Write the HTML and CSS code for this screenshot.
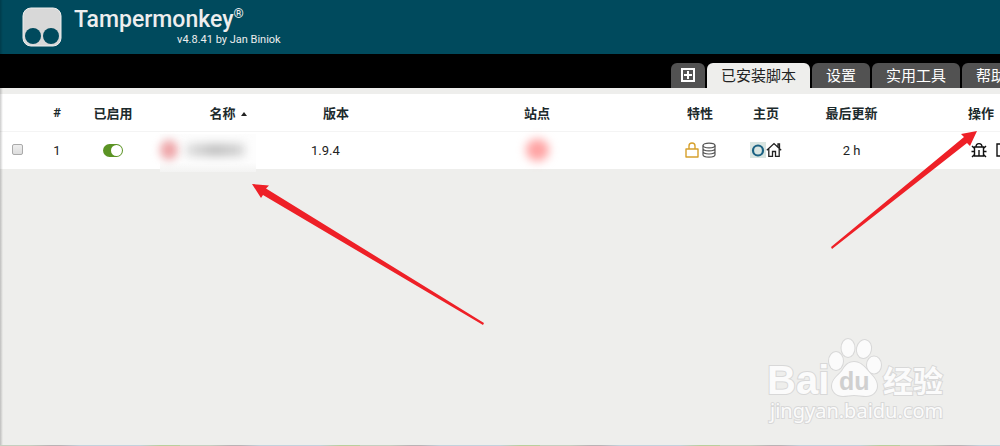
FILE: index.html
```html
<!DOCTYPE html>
<html lang="zh-CN">

<head>
    <meta charset="UTF-8">
    <meta name="viewport" content="width=device-width, initial-scale=1.0">
    <title>Tampermonkey</title>
    <link rel="stylesheet" href="styles.css">
</head>

<body>
    <header class="header">
        <svg class="logo" viewBox="0 0 40 40" aria-hidden="true">
            <rect class="logo-face" x="1" y="1" width="38" height="38" rx="8"/>
            <circle class="logo-eye" cx="11" cy="29" r="8"/>
            <circle class="logo-eye" cx="29" cy="29" r="8"/>
        </svg>
        <div class="title">
            <h1>Tampermonkey<sup>®</sup></h1>
            <p>v4.8.41 by Jan Biniok</p>
        </div>
    </header>

    <nav class="tabs">
        <a class="tab tab-new" href="#new" aria-label="+">
            <svg class="icon" viewBox="0 0 16 16" aria-hidden="true">
                <path d="M2 2h12v12H2zM8 4v8M4 8h8" fill="none" stroke="#fff" stroke-width="2"/>
            </svg>
        </a>
        <a class="tab active" href="#installed">已安装脚本</a>
        <a class="tab" href="#settings">设置</a>
        <a class="tab" href="#utilities">实用工具</a>
        <a class="tab" href="#help">帮助</a>
    </nav>

    <main>
        <table class="scripts">
            <thead>
                <tr>
                    <th class="col-select"></th>
                    <th class="col-number">#</th>
                    <th class="col-enabled">已启用</th>
                    <th class="col-name">名称 <span class="sort"></span></th>
                    <th class="col-version">版本</th>
                    <th class="col-site">站点</th>
                    <th class="col-features">特性</th>
                    <th class="col-home">主页</th>
                    <th class="col-updated">最后更新</th>
                    <th class="col-actions">操作</th>
                </tr>
            </thead>
            <tbody>
                <tr>
                    <td class="col-select"><input type="checkbox" class="check" aria-label="1"></td>
                    <td>1</td>
                    <td><input type="checkbox" class="switch" aria-label="已启用" checked></td>
                    <td class="col-name"><div class="hidden-name"><span class="smudge smudge-icon"></span><span class="smudge smudge-text"></span></div></td>
                    <td class="col-version">1.9.4</td>
                    <td class="col-site"><span class="smudge smudge-site"></span></td>
                    <td>
                        <div class="icons">
                            <svg class="icon" viewBox="0 0 16 16" fill="none" stroke="#d6a02c" stroke-width="1.4" stroke-linejoin="round" aria-hidden="true">
                                <path d="M2 7h12v8H2zM5 7V4a3 3 0 0 1 6 0v3"/>
                            </svg>
                            <svg class="icon" viewBox="0 0 16 16" fill="none" stroke="#555" stroke-width="1.2" aria-hidden="true">
                                <ellipse cx="8" cy="3.5" rx="6" ry="2.4"/>
                                <path d="M2 3.5v9.2c0 3.2 12 3.2 12 0V3.5M2 6.5c0 3.2 12 3.2 12 0M2 9.6c0 3.2 12 3.2 12 0"/>
                            </svg>
                        </div>
                    </td>
                    <td>
                        <div class="icons icons-home">
                            <svg class="icon" viewBox="0 0 16 16" aria-hidden="true">
                                <path fill="#d9e5e1" d="M0 0h16v16H0z"/>
                                <circle cx="8" cy="8.5" r="5" fill="none" stroke="#1b6283" stroke-width="2.2"/>
                            </svg>
                            <svg class="icon" viewBox="0 0 16 16" fill="none" stroke="#222" stroke-width="1.3" aria-hidden="true">
                                <path d="M.8 8.2 8 1.6l7.2 6.6M12 5V2h1.5v4.500M2.800 7v7.300h3.700V9.500h3v4.800h3.700V7"/>
                            </svg>
                        </div>
                    </td>
                    <td>2 h</td>
                    <td class="col-actions">
                        <div class="icons icons-actions">
                            <svg class="icon" viewBox="0 0 16 16" fill="none" stroke="#111" stroke-width="1.4" aria-hidden="true">
                                <path d="M3.500 5h9v9h-9zM5 5c0-4.500 6-4.500 6 0M8 8v6M.5 9.500h3M12.500 9.500h3M1 4l2.500 2.500M15 4l-2.500 2.500M1 15l2.500-2.500M15 15l-2.500-2.500"/>
                            </svg>
                            <svg class="icon" viewBox="0 0 16 16" fill="none" stroke="#111" stroke-width="1.4" aria-hidden="true">
                                <path d="M1 2h12v12H1z"/>
                            </svg>
                        </div>
                    </td>
                </tr>
            </tbody>
        </table>
    </main>

    <!-- red pointers over the page -->
    <svg class="arrows" viewBox="0 0 1000 446" aria-hidden="true">
        <path d="M252 184 269 185.500 266 188.500 484 323 483 325 263 195 261 198Z"/>
        <path d="M977 131 961 134 964 137 831 247 832 249 967 143 970 146Z"/>
    </svg>

    <svg class="watermark" viewBox="0 0 184 92" role="img" aria-label="Baidu 经验">
        <g class="mark">
            <text class="mark-latin" x="0" y="57">Bai</text>
            <ellipse cx="69" cy="24" rx="7" ry="9"/>
            <ellipse cx="81" cy="11" rx="6.500" ry="9"/>
            <ellipse cx="97" cy="12" rx="7" ry="9" transform="rotate(12 97 12)"/>
            <ellipse cx="107" cy="28" rx="7" ry="8.500"/>
            <path d="M87 25c-6 0-9 4-12 9-4 5-10 8-10 15 0 6 5 10 11 10 4 0 7-1 11-1s8 1 12 1c6 0 11-4 11-10 0-7-5-10-9-15-4-5-8-9-14-9z"/>
            <text class="mark-cjk" x="116" y="55">经验</text>
            <text class="mark-url" x="3" y="81">jingyan.baidu.com</text>
        </g>
        <text class="mark-du" x="72" y="53">du</text>
    </svg>
    <div class="page-end"></div>
</body>

</html>
```
FILE: styles.css
```css
body {
    font-family: Roboto, "Noto Sans CJK SC", sans-serif;
    font-size: 13px;
    margin: 0;
    min-height: 100vh;
    position: relative;
    overflow: hidden;
    background-color: #eeeeec;
    color: #222;
}

/* shade along the left edge */
body::before {
    content: "";
    position: absolute;
    top: 0;
    bottom: 0;
    left: 0;
    width: 3px;
    background: linear-gradient(to right, rgba(0, 0, 0, 0.2), transparent);
}

.header {
    background-color: #004a5d;
    color: #eee;
    height: 54px;
    padding-left: 22px;
    display: flex;
    align-items: center;
    gap: 12px;
}

.logo {
    width: 40px;
    height: 40px;
}

.logo-face {
    fill: #d8d8d8;
    stroke: #eee;
    stroke-width: 1;
}

.logo-eye {
    fill: #004a5d;
}

.title {
    text-align: right;
}

.title h1 {
    margin: 0;
    padding-right: 37px;
    font-size: 23px;
    font-weight: 500;
    line-height: 26px;
}

.title sup {
    font-size: 13px;
    line-height: 0;
}

.title p {
    margin: 0;
    font-size: 11px;
    line-height: 14px;
}

.tabs {
    background-color: #000;
    height: 34px;
    display: flex;
    justify-content: flex-end;
    align-items: flex-end;
    gap: 2px;
    margin-right: -20px;
}

.tab {
    box-sizing: border-box;
    height: 25px;
    padding: 0 14px;
    border-radius: 6px 6px 0 0;
    background-color: #525252;
    color: #fff;
    font-size: 15px;
    line-height: 27px;
    text-decoration: none;
    white-space: nowrap;
}

.tab-new {
    padding: 4px 9px;
}

.tab.active {
    background-color: #eeeeec;
    color: #222;
}

.icon {
    display: block;
    width: 16px;
    height: 16px;
    flex: none;
}

main {
    padding-top: 6px;
}

.scripts {
    width: 100%;
    table-layout: fixed;
    border-collapse: collapse;
    background-color: #fff;
    text-align: center;
}

.scripts th,
.scripts td {
    box-sizing: border-box;
    height: 38px;
    padding: 0;
    white-space: nowrap;
}

.scripts th {
    height: 37px;
    color: #1c2a2c;
    border-bottom: 1px solid #f4f4f4;
}

.scripts .col-select {
    width: 36px;
}

.col-number {
    width: 42px;
}

.col-enabled {
    width: 70px;
}

.col-name {
    width: 160px;
}

.scripts .col-version {
    width: 56px;
}

.scripts td.col-version {
    text-align: left;
    padding-left: 3px;
}

.scripts .col-site {
    padding-left: 36px;
}

.col-features {
    width: 52px;
}

.col-home {
    width: 80px;
}

.col-updated {
    width: 91px;
}

.scripts .col-actions {
    width: 103px;
    padding-left: 71px;
    text-align: left;
}

.sort {
    display: inline-block;
    margin-left: 2px;
    border: 3px solid transparent;
    border-top: 0;
    border-bottom: 4px solid #222;
    vertical-align: 2px;
}

.check {
    display: block;
    width: 11px;
    height: 11px;
    margin: 0 0 2px 12px;
    appearance: none;
    border: 1px solid #aaa;
    border-radius: 2px;
    background: linear-gradient(#eee, #ddd);
}

.switch {
    display: block;
    box-sizing: border-box;
    width: 20px;
    height: 13px;
    margin: 0 auto;
    padding: 1px;
    appearance: none;
    border-radius: 7px;
    background-color: #5b9324;
}

.switch::before {
    content: "";
    display: block;
    width: 11px;
    height: 11px;
    margin-left: 7px;
    border-radius: 50%;
    background-color: #fff;
}

.hidden-name {
    position: relative;
    display: flex;
    align-items: center;
    gap: 8px;
    padding-left: 12px;
}

/* pale patch that runs over the row's lower edge */
.hidden-name::before {
    content: "";
    position: absolute;
    left: 12px;
    top: -6px;
    width: 96px;
    height: 38px;
    background: linear-gradient(#fdfdfd 75%, #f3f3f2);
}

.smudge {
    display: inline-block;
    vertical-align: middle;
}

.smudge-icon {
    width: 18px;
    height: 20px;
    border-radius: 50%;
    background-color: #eea5a8;
    filter: blur(4px);
}

.smudge-text {
    width: 58px;
    height: 12px;
    background: linear-gradient(to right, #e0e0e0, #bcbcbc, #d4d4d4);
    filter: blur(5px);
}

.smudge-site {
    width: 23px;
    height: 22px;
    border-radius: 50%;
    background-color: #ffa3a3;
    filter: blur(5px);
}

.icons {
    display: flex;
    justify-content: center;
    gap: 1px;
}

.icons-home {
    gap: 0;
}

.icons-actions {
    justify-content: flex-start;
    gap: 9px;
    padding-left: 3px;
}

.arrows {
    position: absolute;
    top: 0;
    left: 0;
    width: 100%;
    fill: #ee2027;
    pointer-events: none;
}

.watermark {
    position: absolute;
    right: 49px;
    bottom: 17px;
    width: 184px;
    height: 92px;
}

.mark {
    fill: #fbfbfb;
    stroke: #d8d8d8;
    stroke-width: 2px;
    paint-order: stroke;
}

.mark-latin,
.mark-du {
    font-family: "Liberation Sans", sans-serif;
    font-weight: bold;
    font-size: 40px;
}

.mark-du {
    font-size: 25px;
    fill: #d0d0d0;
}

.mark-cjk {
    font-family: "Noto Sans CJK SC", sans-serif;
    font-weight: bold;
    font-size: 30px;
}

.mark-url {
    font-family: "Noto Sans", sans-serif;
    font-size: 20px;
}

/* thin strip of the page below */
.page-end {
    position: absolute;
    left: 0;
    right: 0;
    bottom: 0;
    height: 1px;
    background: repeating-linear-gradient(to right, #c5cfc0 0 30px, #b9b3b5 50px 60px, #c3d2dc 80px 140px, #b8cf9e 160px 180px);
}
```
